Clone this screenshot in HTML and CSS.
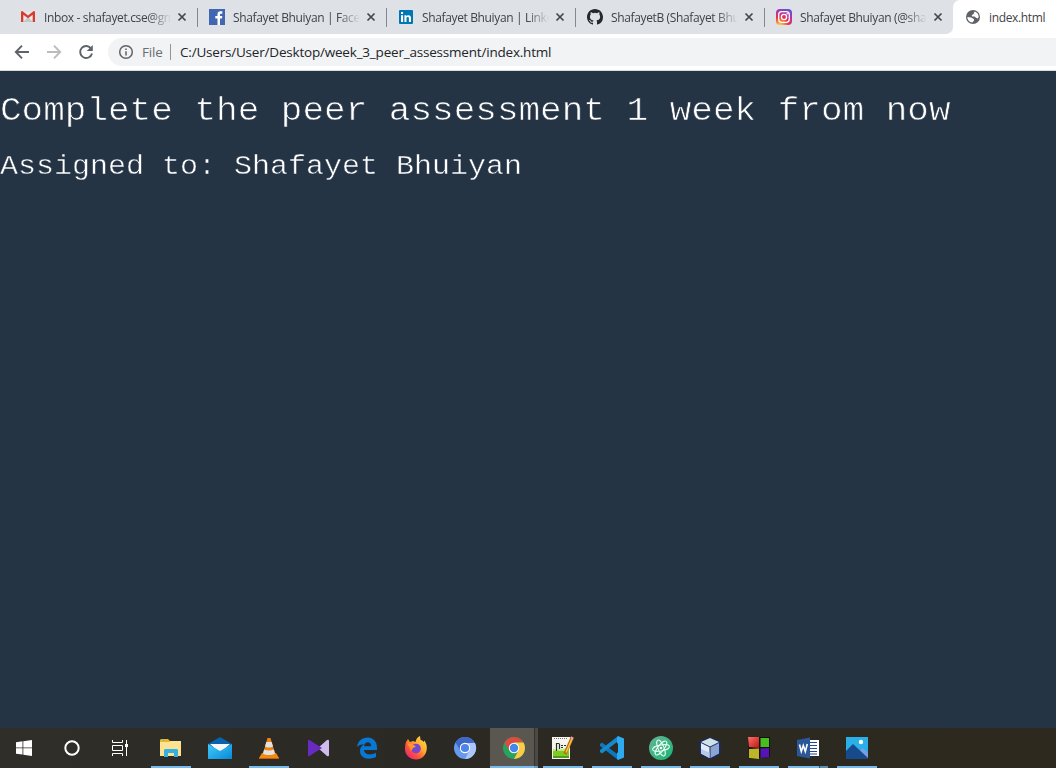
FILE: index.html
```html
<!DOCTYPE html>
<html lang="en">
<head>
<meta charset="utf-8">
<title>index.html</title>
<link rel="stylesheet" href="styles.css">
</head>
<body>
<div class="screen">
<header class="tabs">
  <div class="tab"><svg class="fav" viewBox="0 0 16 16"><path fill="#e8e8e8" d="M2 3h12v10H2z"/><path fill="#c7c7c7" d="M3 13l5-5 5 5z"/><path fill="#d93a2f" d="M1 3.2Q1 2 2.300 2L8 6.500 13.700 2Q15 2 15 3.200V13h-2.300V5.700L8 9.300 3.300 5.700V13H1z"/></svg><span class="title">Inbox - shafayet.cse@gm</span><svg class="close" viewBox="0 0 10 10"><path d="M1.500 1.500l7 7m0-7l-7 7"/></svg></div>
  <div class="tab"><svg class="fav" viewBox="0 0 16 16"><path fill="#4267b2" d="M0 0h16v16H0z"/><path fill="#fff" d="M8.500 16V9.500H6.300V7h2.200V5.200C8.500 3.300 9.500 2.300 11.400 2.300h1.900v2.400h-1.200c-.9 0-1.100.4-1.100 1.100V7h2.300L13 9.500h-2V16z"/></svg><span class="title">Shafayet Bhuiyan | Facel</span><svg class="close" viewBox="0 0 10 10"><path d="M1.500 1.500l7 7m0-7l-7 7"/></svg></div>
  <div class="tab"><svg class="fav" viewBox="0 0 16 16"><rect x="1" y="1" width="14" height="14" rx="1" fill="#0077b5"/><path fill="#fff" d="M3 6.300h2.100V13H3zM3 3h2.100v2H3zM6.400 6.300h2v.9c1-1.600 4.600-1.500 4.600 1.600V13h-2.100V9.500c0-2-2.400-1.800-2.400 0V13H6.400z"/></svg><span class="title">Shafayet Bhuiyan | Linke</span><svg class="close" viewBox="0 0 10 10"><path d="M1.500 1.500l7 7m0-7l-7 7"/></svg></div>
  <div class="tab"><svg class="fav" viewBox="0 0 16 16"><path fill="#24292e" d="M8 0C3.580 0 0 3.580 0 8c0 3.540 2.290 6.530 5.470 7.590.4.070.55-.17.55-.38 0-.19-.01-.82-.01-1.490-2.010.37-2.530-.49-2.690-.94-.09-.23-.48-.94-.82-1.130-.28-.15-.68-.52-.01-.53.63-.01 1.080.58 1.230.82.72 1.210 1.870.87 2.330.66.070-.52.28-.87.51-1.070-1.780-.2-3.640-.89-3.640-3.950 0-.87.31-1.590.82-2.150-.08-.2-.36-1.020.08-2.120 0 0 .67-.21 2.200.82a7.600 7.600 0 014 0c1.530-1.040 2.200-.82 2.200-.82.44 1.100.16 1.920.08 2.120.51.56.82 1.270.82 2.150 0 3.070-1.870 3.750-3.650 3.950.29.25.54.73.54 1.480 0 1.070-.01 1.930-.01 2.200 0 .21.15.46.55.38A8.010 8.010 0 0016 8c0-4.420-3.580-8-8-8z"/></svg><span class="title">ShafayetB (Shafayet Bhu</span><svg class="close" viewBox="0 0 10 10"><path d="M1.500 1.500l7 7m0-7l-7 7"/></svg></div>
  <div class="tab"><svg class="fav" viewBox="0 0 16 16"><defs><radialGradient id="ig" cx=".25" cy="1.050" r="1.100"><stop offset="0" stop-color="#ffd95a"/><stop offset=".25" stop-color="#fb8c35"/><stop offset=".5" stop-color="#e8334f"/><stop offset=".75" stop-color="#c32fa0"/><stop offset="1" stop-color="#6650d0"/></radialGradient></defs><rect width="16" height="16" rx="4" fill="url(#ig)"/><g fill="none" stroke="#fff" stroke-width="1.300"><rect x="2.700" y="2.700" width="10.600" height="10.600" rx="3"/><circle cx="8" cy="8" r="2.600"/></g><circle cx="11.200" cy="4.800" r=".8" fill="#fff"/></svg><span class="title">Shafayet Bhuiyan (@sha</span><svg class="close" viewBox="0 0 10 10"><path d="M1.500 1.500l7 7m0-7l-7 7"/></svg></div>
  <div class="tab active"><svg class="fav" viewBox="0 0 16 16"><circle cx="8" cy="8" r="7" fill="#5f6368"/><path fill="#fff" d="M2.300 8.100L6 8.500c1.300 0 1.600 1.300 3 1.500v1.500L7.400 13.600C4.200 13.300 2.300 11 2.300 8.100zM9.500 2.600c2.400.7 4 2.600 4.200 4.900-.1 1-.5 1.600-.9 2.100L11 8.800 9.600 7.600H7.200L6.700 6.300 8.600 5z"/></svg><span class="title">index.html</span></div>
</header>
<nav class="toolbar">
  <svg class="nav" viewBox="0 0 16 16"><path d="M15 8H2m6-6.300L1.800 8 8 14.300"/></svg>
  <svg class="nav off" viewBox="0 0 16 16"><path d="M1 8h13M8 1.700L14.200 8 8 14.300"/></svg>
  <svg class="nav" viewBox="0 0 16 16"><path d="M13.200 4.700A6 6 0 1 0 14 9.500"/><path fill="#5f6368" stroke="none" d="M14.800 1v6H8.700z"/></svg>
  <div class="address">
    <svg class="info" viewBox="0 0 16 16"><circle cx="8" cy="8" r="6.300"/><path d="M8 7.200V11.500M8 4.500V6"/></svg>
    <span class="scheme">File</span><i class="bar"></i><span class="url">C:/Users/User/Desktop/week_3_peer_assessment/index.html</span>
  </div>
</nav>
<main class="page">
  <h1>Complete the peer assessment 1 week from now</h1>
  <h2>Assigned to: Shafayet Bhuiyan</h2>
</main>
<footer class="taskbar">
  <div class="sys"><svg viewBox="0 0 24 24"><path fill="#fff" d="M4 6.300l6.500-1v6.200H4zM11.300 5.200L20 4v7.500h-8.700zM4 12.300h6.500v6.300L4 17.700zM11.300 12.300H20V20l-8.700-1.200z"/></svg></div>
  <div class="sys"><svg viewBox="0 0 24 24"><circle cx="12" cy="12" r="6.700" fill="none" stroke="#fff" stroke-width="2"/></svg></div>
  <div class="sys"><svg viewBox="0 0 24 24"><g fill="none" stroke="#fff"><path d="M4.500 4v2.500h10V4M4.500 20v-2.500h10V20M4.500 9.500h10v5h-10zM18.500 4v16"/></g><path fill="#fff" d="M17 8h3v3h-3z"/></svg></div>
  <div class="apps">
  <div class="app open"><svg viewBox="0 0 24 24"><path fill="#eeb526" d="M2 3h7l2 2h11v15H1V4z"/><path fill="#fde391" d="M1 6h9l2-1h10v15H1z"/><path fill="#5bc4e4" d="M3 3.500h3v1H3z"/><path fill="#36afe2" d="M5 21v-7l1-1h12l1 1v7h-4v-4H9v4z"/></svg></div>
  <div class="app"><svg viewBox="0 0 24 24"><defs><linearGradient id="mail" y2="1"><stop stop-color="#42cbfb"/><stop offset="1" stop-color="#0889d7"/></linearGradient></defs><path fill="#0962ad" d="M0 8L12 1l12 7v5H0z"/><path fill="#f6f6f6" d="M2 8h20l-10 9z"/><path fill="url(#mail)" d="M0 8l12 7 12-7v15H0z"/></svg></div>
  <div class="app open"><svg viewBox="0 0 24 24"><path fill="#f48b10" d="M5 17h14l3 5v1H2v-1z"/><path fill="#c65e05" d="M2 22h20v1H2z"/><path fill="#f08010" d="M10.500 2h3l4.700 16c-2 2-10.400 2-12.400 0z"/><path fill="#e1e2e2" d="M9.300 6h5.400l1.300 4.500c-2 1.300-6 1.300-8 0zM7.100 13.500c3 1.400 6.800 1.400 9.800 0l1.100 4c-2.500 2-9.500 2-12 0z"/></svg></div>
  <div class="app"><svg viewBox="0 0 24 24"><path fill="#cfbbee" d="M23 5v14q0 2-2 1l-9-8 9-8q2-1 2 1z"/><path fill="#672bc2" d="M2 4.500q0-1.300 1.500-.5L16 12 3.500 20Q2 20.500 2 19.500z"/></svg></div>
  <div class="app"><svg viewBox="0 0 24 24"><path fill="#0878d5" d="M2 11C3 5 7 1.500 12.500 1.500 18.500 1.500 22 6 22 11.500v2.500H9c.3 5 7 5.500 12 2.800v4.300C12 25 5 21.500 5 15c0-3.500 2-5.500 4.500-6.700C6.500 8.300 4 9 2 11zm7-.8h7.200C16.200 5 9.700 5 9 10.200z"/></svg></div>
  <div class="app"><svg viewBox="0 0 24 24"><defs><linearGradient id="fire" x1="1" x2=".1" y2="1"><stop stop-color="#ffe64a"/><stop offset=".4" stop-color="#ffad2f"/><stop offset=".68" stop-color="#ff533a"/><stop offset="1" stop-color="#e61d83"/></linearGradient></defs><path fill="url(#fire)" d="M2 6l2-3 2 3 3-1 2.500 1c.5-3 2-5 4.500-6l.5 4q2 0 3 2l1-1.500c1.500 2.500 2.500 5 2.300 8C22.500 19 18 23.500 12 23.500S1 19 1 13c0-3 .3-5 1-7z"/><circle cx="12" cy="12.500" r="4.800" fill="#7846cf"/><path fill="#ff982a" d="M3 7l5 1 4 2.500-3 1.500-2 3c0-1-2-4-4-8z"/></svg></div>
  <div class="app"><svg viewBox="0 0 24 24"><circle cx="12" cy="12" r="11" fill="#6799ed"/><path fill="#3d68c7" d="M2.500 6.500a11 11 0 0 1 19 0L12 7.500 7 14z"/><path fill="#aac6fa" d="M12 7h10a11 11 0 0 1-10 16l4.500-8.500z"/><circle cx="12" cy="12" r="5.200" fill="#fff"/><circle cx="12" cy="12" r="4.100" fill="#4f84e8"/></svg></div>
  <div class="app open chrome"><svg viewBox="0 0 24 24"><circle cx="12" cy="12" r="11" fill="#26a35c"/><path fill="#dc4c3f" d="M2.500 6.500a11 11 0 0 1 19 0H12l-5 8z"/><path fill="#fdcc45" d="M12 6.500h9.500A11 11 0 0 1 12 23l4.500-8.500z"/><circle cx="12" cy="12" r="5.200" fill="#fff"/><circle cx="12" cy="12" r="4.200" fill="#4687ed"/></svg></div>
  <div class="app open"><svg viewBox="0 0 24 24"><path fill="#f5f4ed" d="M1 1h18v22H1z"/><path fill="#b9e86a" d="M2 13q9 2 16-3v5H2z"/><path fill="#7ccc22" d="M2 15h16v7H2z"/><path fill="#519a25" d="M2 20h16v2H2z"/><path d="M3 2.500h14" stroke="#777" stroke-dasharray="1 1"/><path d="M5.500 7v8M8.500 8v5M5 7.500h3.500M10 9.500h2M10 11.500h2m1-2h2" stroke="#26302a" stroke-width="1.200" fill="none"/><path d="M21 2l-7 16" stroke="#b66b14" stroke-width="3.300"/><path d="M21 3l-6 13.500" stroke="#ffc13a" stroke-width="1.600"/><path d="M20.500 3l1-2" stroke="#e7a3a4" stroke-width="3"/></svg></div>
  <div class="app open"><svg viewBox="0 0 24 24"><path fill="#0b79bf" d="M0 8l2-1.500 17 13-1.500 4L0 10z"/><path fill="#1689cc" d="M0 16l2 1.500L19 4.500 17.500.5 0 14z"/><path fill="#2eaaf0" d="M18 0l6 2.500v19L18 24l-1-1V1z"/><path fill="#2d2a21" d="M18 7v10l-7-5z"/></svg></div>
  <div class="app open"><svg viewBox="0 0 24 24"><defs><linearGradient id="atom" y2="1"><stop stop-color="#66b395"/><stop offset="1" stop-color="#19b575"/></linearGradient></defs><circle cx="12" cy="12" r="12" fill="url(#atom)"/><g fill="none" stroke="#e7fff4" stroke-width="1"><ellipse cx="12" cy="12" rx="3" ry="8.500" transform="rotate(-22 12 12)"/><ellipse cx="12" cy="12" rx="3" ry="8.500" transform="rotate(38 12 12)"/><ellipse cx="12" cy="12" rx="3" ry="8.500" transform="rotate(80 12 12)"/></g><circle cx="12" cy="12" r="1.300" fill="#fff"/></svg></div>
  <div class="app open"><svg viewBox="0 0 24 24"><path fill="#1b2c68" d="M12 1l10.500 4.500V18L12 23.500 1.500 18V5.500z"/><path fill="#cfe3e6" d="M12 2l9 4-9 4.500L3 6z"/><path fill="#e3ebf8" d="M3 7l8.500 4.200V22L3 17.500z"/><path fill="#8ba6d2" d="M21 7l-8.500 4.200V22l8.500-4.500z"/><path fill="#b7cae9" d="M3 13l8.500 3.500V22L3 17.500z"/></svg></div>
  <div class="app open"><svg viewBox="0 0 24 24"><defs><linearGradient id="red" x2="1" y2="1"><stop stop-color="#ff7167"/><stop offset="1" stop-color="#b91616"/></linearGradient></defs><path fill="#111" d="M1 1h22v20L2 23z"/><path fill="url(#red)" d="M1 1h11v11L2 11z"/><path fill="#48bd20" d="M13.500 2H22v9h-8.500z"/><path fill="#bdb52a" d="M2 13l10-.5V23L2 22z"/><path fill="#5614b7" d="M13.500 12.500L22 12v9l-8.500 1z"/></svg></div>
  <div class="app open word"><svg viewBox="0 0 24 24"><path fill="#fff" d="M13 4h10v16H13z"/><path d="M14 6.500h7m-7 3h7m-7 3h7m-7 3h7m-7 2.500h7" stroke="#244b8b" stroke-width="1.200"/><path fill="#2b579a" d="M1 4l13-2.500v21L1 20z"/><path fill="none" stroke="#fff" stroke-width="1.600" d="M3.500 8.500l1.800 7 2-6 2 6 2-7.500"/></svg></div>
  <div class="app open"><svg viewBox="0 0 24 24"><path fill="#2aafe9" d="M1 1h22v22H1z"/><path fill="#7c9de2" d="M12 17l6-5 5 5v6H12z"/><path fill="#164a8d" d="M1 15l7-7 15 14v1H1z"/><circle cx="16" cy="6" r="2.200" fill="#fff"/></svg></div>
  </div>
</footer>
</div>
</body>
</html>
```
FILE: styles.css
```css
* { box-sizing: border-box; }
body { margin: 0; overflow: hidden; }
.screen { width: 1056px; height: 768px; display: flex; flex-direction: column; background: #fff; font-family: "Open Sans", sans-serif; }
svg { display: block; flex: none; }
.tabs { height: 34px; display: flex; background: #fff; }
.tab { position: relative; flex: none; width: 189px; height: 34px; display: flex; align-items: center; padding-left: 11px; background: #dee1e6; color: #3f4347; font-size: 12px; }
.tab:first-child { width: 198px; padding-left: 20px; }
.tab:not(.active)::after { content: ""; position: absolute; right: 0; top: 8px; width: 1px; height: 19px; background: #85888c; }
.tab:nth-child(5) { border-radius: 0 0 7px 0; }
.tab:nth-child(5)::after { display: none; }
.tab:nth-child(5) { width: 188px; }
.tab.active { width: 103px; padding-left: 12px; background: linear-gradient(#dee1e6 50%, #fff 50%); }
.tab.active::before { content: ""; position: absolute; inset: 0; background: #fff; border-radius: 7px 0 0 0; }
.tab.active > * { position: relative; }
.fav { width: 16px; height: 16px; }
.title { width: 130px; margin-left: 8px; padding-top: 1px; white-space: nowrap; letter-spacing: -.36px; line-height: 20px; -webkit-mask-image: linear-gradient(90deg, #000 105px, transparent 127px); mask-image: linear-gradient(90deg, #000 105px, transparent 127px); }
.active .title { width: 60px; -webkit-mask-image: none; mask-image: none; }
.close { width: 10px; height: 10px; margin-left: 3px; stroke: #43474b; stroke-width: 1.7; }
.toolbar { height: 37px; display: flex; align-items: center; padding: 0 0 1px 14px; background: #fff; border-bottom: 1px solid #d7dadd; }
.nav { width: 16px; height: 16px; margin-right: 16px; fill: none; stroke: #5f6368; stroke-width: 1.9; }
.off { stroke: #babcbe; }
.address { flex: 1; height: 28px; display: flex; align-items: center; margin-left: -2px; padding-left: 10px; border-radius: 14px 0 0 14px; background: #f1f3f4; font-size: 13.5px; line-height: 20px; white-space: nowrap; }
.info { width: 16px; height: 16px; fill: none; stroke: #5f6368; stroke-width: 1.5; }
.scheme { width: 20px; margin-left: 8px; color: #6a6e73; letter-spacing: -.2px; }
.bar { width: 1px; height: 16px; margin: 0 9px 0 8px; background: #929598; }
.url { color: #222529; letter-spacing: -.2px; }
.page { flex: 1; background: #253445; color: #fff; font-family: "Courier New", "Liberation Mono", monospace; }
h1, h2 { margin: 0; font-weight: 400; white-space: nowrap; -webkit-text-stroke: .7px #253445; transform: scaleY(.9); transform-origin: 0 75%; }
h1 { padding-top: 19px; font-size: 36px; line-height: 42px; }
h2 { padding-top: 17px; font-size: 30px; line-height: 34px; -webkit-text-stroke-width: .5px; }
.taskbar { height: 40px; display: flex; background: linear-gradient(90deg, #302e29, #2b2923 40%, #2d291e); }
.taskbar svg { width: 24px; height: 24px; position: relative; }
.sys { width: 48px; display: flex; align-items: center; justify-content: center; }
.apps { display: flex; padding-left: 2px; }
.app { position: relative; width: 49px; display: flex; align-items: center; padding-left: 13px; }
.open::after { content: ""; position: absolute; left: 5px; bottom: 0; width: 40px; height: 2px; background: #76b9ed; }
.chrome::before { content: ""; position: absolute; left: 1px; top: 0; width: 48px; height: 40px; background: linear-gradient(90deg, #5a5750 44px, #35332f 44px, #35332f 45px, #4b4943 45px); }
.chrome::after { left: 1px; width: 48px; background: linear-gradient(90deg, #76b9ed 44px, #659dca 44px); }
.word::after { background: linear-gradient(90deg, #76b9ed 31px, #35576f 31px, #35576f 32px, #5b8db5 32px); }
```
